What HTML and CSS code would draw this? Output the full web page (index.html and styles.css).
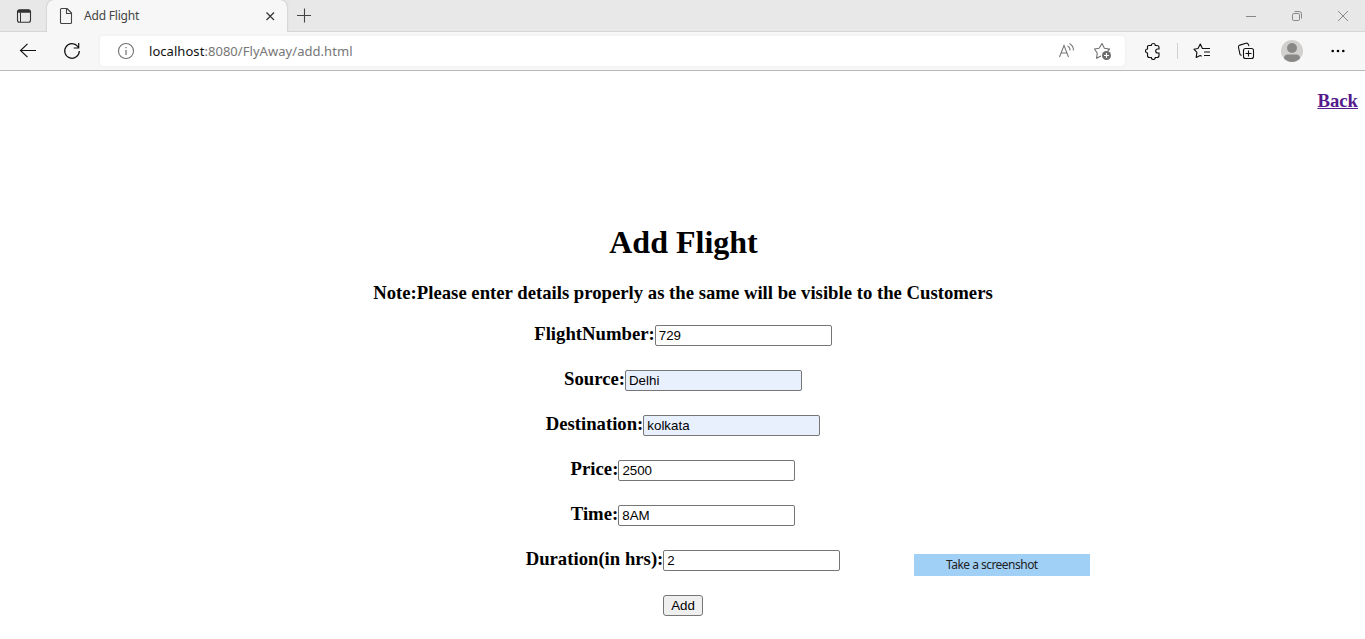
FILE: index.html
```html
<!DOCTYPE html>
<html lang="en">
<head>
<meta charset="utf-8">
<title>Add Flight</title>
<link rel="stylesheet" href="styles.css">
</head>
<body>
<header class="browser">
  <div class="tabs">
    <div class="tab-menu">
      <svg class="icon" width="16" height="16" viewBox="0 0 16 16"><rect x="1.500" y="1.800" width="13" height="12.400" rx="2" fill="none" stroke="#333" stroke-width="1.100"/><path d="M1.500 4.800V3.800a2 2 0 0 1 2-2h9a2 2 0 0 1 2 2v1z" fill="#333"/><path d="M4.500 4.500V14" stroke="#333"/></svg>
    </div>
    <div class="tab">
      <svg class="icon" width="14" height="18" viewBox="0 0 14 18"><path d="M2.500 1.500h5.500l4.500 4.500v9.500a1 1 0 0 1-1 1h-9a1 1 0 0 1-1-1v-13a1 1 0 0 1 1-1zM7.500 1.500v5h5" fill="none" stroke="#444" stroke-width="1.100" stroke-linejoin="round"/></svg>
      <span class="tab-title">Add Flight</span>
      <svg class="icon" width="10" height="10" viewBox="0 0 10 10"><path d="M1.500 1.500l7.500 7.500M9 1.500L1.500 9" stroke="#333" stroke-width="1.200"/></svg>
    </div>
    <svg class="icon new-tab" width="16" height="16" viewBox="0 0 16 16"><path d="M1 8.500h14M8.500 1.500v14" stroke="#444" stroke-width="1.100"/></svg>
    <div class="window-controls">
      <svg width="12" height="12" viewBox="0 0 12 12"><path d="M1 6.500h10" stroke="#888"/></svg>
      <svg width="12" height="12" viewBox="0 0 12 12"><rect x="1.500" y="3.500" width="7" height="7" rx="1.300" fill="none" stroke="#888"/><path d="M3.500 1.500H8a2.500 2.500 0 0 1 2.500 2.500v4.500" fill="none" stroke="#888"/></svg>
      <svg width="12" height="12" viewBox="0 0 12 12"><path d="M1 1l10 10M11 1L1 11" stroke="#888"/></svg>
    </div>
  </div>
  <div class="toolbar">
    <svg class="icon back-icon" width="18" height="16" viewBox="0 0 18 16"><path d="M17 7.500H1.500M8.500.8L1.500 7.500l7 6.700" fill="none" stroke="#111" stroke-width="1.150"/></svg>
    <svg class="icon reload-icon" width="18" height="18" viewBox="0 0 18 18"><path d="M16.300 9A7.300 7.300 0 1 1 14.700 4.400L16 6M15.700 1v5h-5" fill="none" stroke="#111" stroke-width="1.200"/></svg>
    <div class="address">
      <svg class="icon" width="18" height="18" viewBox="0 0 18 18"><circle cx="9" cy="9" r="7.500" fill="none" stroke="#717171" stroke-width="1.100"/><path d="M9 8v5M9 5v1.300" stroke="#717171" stroke-width="1.200"/></svg>
      <span class="url"><span class="host">localhost</span>:8080/FlyAway/add.html</span>
      <svg class="icon read-icon" width="18" height="18" viewBox="0 0 18 18"><path d="M1.500 15L6 3.500 10.500 15M3.200 11h5.600M9.500 4a4.500 4.500 0 0 1 2.500 4.500M11.500 1.500a8 8 0 0 1 4 7" fill="none" stroke="#777" stroke-width="1.050"/></svg>
      <svg class="icon" width="20" height="20" viewBox="0 0 20 20"><path d="M8 15l-4.500 2.300.8-5.100L1.500 8l4.600-.8L9 2.500l2.400 4.700 5.300.9-2 1.900" fill="none" stroke="#717171" stroke-width="1.100" stroke-linejoin="round"/><circle cx="13.500" cy="14.500" r="4.500" fill="#6c6c6c"/><path d="M11 14.500h5M13.500 12v5" stroke="#fff" stroke-width="1.100"/></svg>
    </div>
    <svg class="icon puzzle-icon" width="18" height="18" viewBox="0 0 18 18"><path d="M4.500 3.500H7.300a2 2 0 0 1 4 0H13a2 2 0 0 1 2 2V7h-1.300a2 2 0 0 0 0 4H15v2.500a2 2 0 0 1-2 2h-1.700a2 2 0 0 1-4 0H5.500a2 2 0 0 1-2-2V11a2 2 0 0 1 0-4V4.500a1 1 0 0 1 1-1z" fill="none" stroke="#111" stroke-width="1.150"/></svg>
    <span class="divider"></span>
    <svg class="icon favorites-icon" width="18" height="18" viewBox="0 0 18 18"><path d="M10.500 6.500H9.400L7.300 2 5 6.500.9 7.200l3 3.200L3.200 15.500l4-2 1.500.8M10.500 6.500H17M11 10H17M11 13.500H17" fill="none" stroke="#111" stroke-width="1.150" stroke-linejoin="round"/></svg>
    <svg class="icon collections-icon" width="18" height="18" viewBox="0 0 18 18"><rect x="6.500" y="6.500" width="10" height="10" rx="2" fill="none" stroke="#111" stroke-width="1.100"/><path d="M11.500 8.500v6M8.500 11.500h6M4.500 13.500L3 12.500 1.500 5.500A2 2 0 0 1 2.800 3.100L9 1.200a2 2 0 0 1 2.500 1.500l.4 1.500" fill="none" stroke="#111" stroke-width="1.100"/></svg>
    <svg class="icon profile-icon" width="22" height="22" viewBox="0 0 22 22"><circle cx="11" cy="11" r="11" fill="#d2d0ce"/><circle cx="11" cy="8" r="5" fill="#8a8886"/><path d="M3 18.500a4 4 0 0 1 4-4h8a4 4 0 0 1 4 4A11 11 0 0 1 3 18.500z" fill="#8a8886"/></svg>
    <svg class="icon more-icon" width="14" height="4" viewBox="0 0 14 4"><circle cx="1.700" cy="2" r="1.300"/><circle cx="7" cy="2" r="1.300"/><circle cx="12.300" cy="2" r="1.300"/></svg>
  </div>
</header>
<main class="page">
  <a class="back" href="#">Back</a>
  <h1 class="title">Add Flight</h1>
  <h3 class="note">Note:Please enter details properly as the same will be visible to the Customers</h3>
  <form class="form">
    <label class="row">FlightNumber:<input class="field" value="729"></label>
    <label class="row">Source:<input class="field autofilled" value="Delhi"></label>
    <label class="row">Destination:<input class="field autofilled" value="kolkata"></label>
    <label class="row">Price:<input class="field" value="2500"></label>
    <label class="row">Time:<input class="field" value="8AM"></label>
    <label class="row">Duration(in hrs):<input class="field" value="2"></label>
    <button class="add" type="button">Add</button>
  </form>
</main>
<div class="capture-tip">Take a screenshot</div>
</body>
</html>
```
FILE: styles.css
```css
* { box-sizing: border-box; }
body {
  margin: 0;
  height: 639px;
  overflow: hidden;
  background: #fff;
  color: #000;
  font-family: "Liberation Serif", serif;
}
.icon { flex: none; display: block; }
.browser { font-family: "Noto Sans", sans-serif; }
.tabs {
  display: flex;
  height: 32px;
  background: #e8e8e8;
  box-shadow: inset 0 -1px #d6d6d6;
}
.tab-menu { width: 47px; padding: 8px 0 0 16px; }
.tab {
  display: flex;
  align-items: center;
  width: 240px;
  padding: 0 12px;
  background: #f7f7f7;
  border-radius: 7px 7px 0 0;
  box-shadow: 0 0 2px #aaa;
  clip-path: inset(0 -3px 0 -3px);
}
.tab-title {
  flex: 1;
  margin-left: 11px;
  font-size: 12px;
  line-height: 16px;
  padding-bottom: 1px;
  letter-spacing: -0.2px;
  color: #444;
}
.new-tab { margin: 7px 0 0 9px; }
.window-controls {
  display: flex;
  gap: 34px;
  margin-left: auto;
  padding: 10px 16px 0 0;
}
.toolbar {
  display: flex;
  align-items: center;
  height: 39px;
  background: #f7f7f7;
  border-bottom: 1px solid #b9b9b9;
}
.back-icon { margin-left: 19px; }
.reload-icon { margin-left: 26px; }
.address {
  display: flex;
  align-items: center;
  width: 1025px;
  height: 30px;
  margin-left: 19px;
  padding: 0 12px 0 17px;
  background: #fff;
  border-radius: 4px;
  box-shadow: 0 0 3px #e9e9e9;
}
.url {
  flex: 1;
  margin-left: 14px;
  font-size: 13px;
  letter-spacing: 0.05px;
  color: #767676;
}
.host { color: #111; }
.read-icon { margin-right: 17px; }
.puzzle-icon { margin-left: 19px; }
.divider { width: 1px; height: 16px; margin-left: 15px; background: #d0d0d0; }
.favorites-icon { margin-left: 15px; }
.collections-icon { margin-left: 26px; }
.profile-icon { margin-left: 26px; }
.more-icon { margin-left: 28px; }
.page {
  display: flex;
  flex-direction: column;
  align-items: center;
  padding: 19px 0 0 1px;
}
.back {
  align-self: flex-end;
  margin-right: 7px;
  font-size: 18.72px;
  line-height: 21px;
  font-weight: bold;
  color: #551a8b;
}
.title { margin: 113px 0 0; font-size: 32px; line-height: 37px; padding-left: 1px; }
.note { margin: 21px 0 0; font-size: 18.72px; line-height: 22px; }
.form {
  display: flex;
  flex-direction: column;
  align-items: center;
  gap: 24px;
  margin-top: 21px;
}
.row {
  display: flex;
  height: 21px;
  font-size: 18.72px;
  line-height: 17px;
  font-weight: bold;
}
.field {
  width: 177px;
  height: 21px;
  padding: 1px 3px;
  border: 1px solid #767676;
  border-radius: 2px;
  background: #fff;
  font: 13.333px "Liberation Sans", sans-serif;
}
.autofilled { background: #e8f0fe; }
.add {
  width: 40px;
  height: 21px;
  padding: 0;
  border: 1px solid #767676;
  border-radius: 3px;
  background: #efefef;
  color: #000;
  font: 13.333px "Liberation Sans", sans-serif;
}
.capture-tip {
  position: absolute;
  left: 914px;
  top: 554px;
  width: 176px;
  height: 22px;
  padding-left: 32px;
  background: #a1d0f6;
  color: #222;
  font: 12px/22px "Noto Sans", sans-serif;
  letter-spacing: -0.52px;
}
```
